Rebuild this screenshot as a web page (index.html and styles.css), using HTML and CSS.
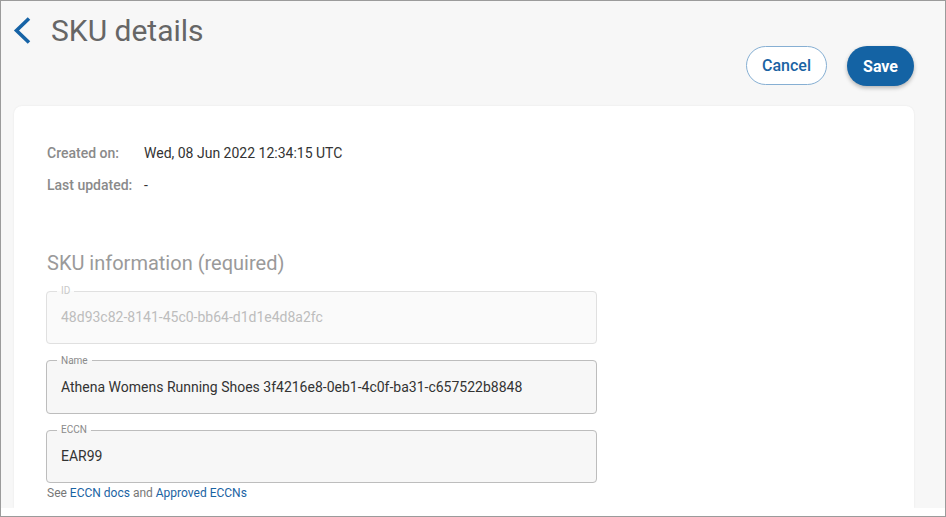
FILE: index.html
```html
<!DOCTYPE html>
<html lang="en">
<head>
<meta charset="utf-8">
<title>SKU details</title>
<link rel="stylesheet" href="styles.css">
</head>
<body>
<div class="frame">
  <header class="header">
    <div class="title-row">
      <a class="back" href="#" aria-label="Back">
        <svg width="20" height="32" viewBox="0 0 20 32" aria-hidden="true">
          <polyline points="17,3.5 4.5,15.5 17,27.5" fill="none" stroke="#1663a6" stroke-width="3.6" stroke-linejoin="miter"/>
        </svg>
      </a>
      <h1 class="title">SKU details</h1>
    </div>
    <div class="actions">
      <button class="btn btn-outline" type="button">Cancel</button>
      <button class="btn btn-primary" type="button">Save</button>
    </div>
  </header>
  <main class="card">
    <dl class="meta">
      <dt>Created on:</dt><dd>Wed, 08 Jun 2022 12:34:15 UTC</dd>
      <dt>Last updated:</dt><dd>-</dd>
    </dl>
    <h2 class="section-title">SKU information (required)</h2>
    <div class="fields">
      <fieldset class="field field-disabled">
        <legend>ID</legend>
        <div class="value">48d93c82-8141-45c0-bb64-d1d1e4d8a2fc</div>
      </fieldset>
      <fieldset class="field">
        <legend>Name</legend>
        <div class="value">Athena Womens Running Shoes 3f4216e8-0eb1-4c0f-ba31-c657522b8848</div>
      </fieldset>
      <div class="field-group">
        <fieldset class="field">
          <legend>ECCN</legend>
          <div class="value">EAR99</div>
        </fieldset>
        <p class="helper">See <a href="#">ECCN docs</a> and <a href="#">Approved ECCNs</a></p>
      </div>
    </div>
  </main>
  <div class="footer-strip"></div>
</div>
</body>
</html>
```

FILE: styles.css
```css
* { box-sizing: border-box; }

html, body {
  margin: 0;
  padding: 0;
}

body {
  font-family: Roboto, "Liberation Sans", Arial, sans-serif;
  background: #ffffff;
}

.frame {
  width: 946px;
  height: 517px;
  border: 1px solid #9b9b9b;
  background: #f7f7f7;
  display: flex;
  flex-direction: column;
  overflow: hidden;
}

.header {
  padding: 11px 31px 0 11px;
  display: flex;
  flex-direction: column;
}

.title-row {
  display: flex;
  align-items: center;
  height: 34px;
  padding-top: 4px;
}

.back {
  display: flex;
  width: 20px;
  height: 32px;
  margin-right: 19px;
}

.title {
  margin: 0;
  font-size: 30px;
  line-height: 34px;
  font-weight: 400;
  color: #666666;
}

.actions {
  display: flex;
  justify-content: flex-end;
  align-items: flex-start;
  gap: 20px;
  height: 40px;
}

.btn {
  font-family: Roboto, "Liberation Sans", Arial, sans-serif;
  font-size: 16px;
  border-radius: 20px;
  cursor: pointer;
}

.btn-outline {
  height: 39px;
  width: 81px;
  padding: 0;
  background: #ffffff;
  border: 1px solid #86afd3;
  color: #1a63a3;
  font-weight: 500;
}

.btn-primary {
  height: 40px;
  width: 67px;
  padding: 0;
  background: #1463a4;
  border: none;
  color: #ffffff;
  font-weight: 700;
  box-shadow: 0 2px 4px rgba(0, 0, 0, 0.28);
}

.card {
  flex: 1;
  margin: 20px 31px 0 13px;
  background: #ffffff;
  border-radius: 8px 8px 0 0;
  box-shadow: 0 0 2px rgba(0, 0, 0, 0.08);
  padding: 37px 0 0 33px;
}

.meta {
  display: grid;
  grid-template-columns: 97px auto;
  row-gap: 12px;
  margin: 0;
  font-size: 14px;
  line-height: 20px;
}

.meta dt {
  color: #8a8a8a;
  font-weight: 500;
}

.meta dd {
  margin: 0;
  color: #333333;
}

.section-title {
  margin: 54px 0 8px 0;
  font-size: 20px;
  line-height: 28px;
  font-weight: 400;
  color: #9a9a9a;
}

.fields {
  display: flex;
  flex-direction: column;
  gap: 10.5px;
  width: 551px;
  margin-left: -1px;
}

.field {
  margin: 0;
  padding: 0 14px 16px 14px;
  border: 1px solid #bdbdbd;
  border-radius: 4px;
  background: #f7f7f7;
  min-width: 0;
}

.field legend {
  margin-left: -4px;
  padding: 0 4px;
  font-size: 10px;
  line-height: 12px;
  color: #8a8a8a;
}

.field .value {
  padding-top: 10px;
  font-size: 14px;
  line-height: 20px;
  color: #333333;
  white-space: nowrap;
}

.field-disabled {
  border-color: #e0e0e0;
  background: #fafafa;
}

.field-disabled legend {
  color: #c9c9c9;
}

.field-disabled .value {
  color: #bdbdbd;
}

.helper {
  margin: 2px 0 0 1px;
  font-size: 12px;
  line-height: 16px;
  color: #777777;
}

.helper a {
  color: #1a63a3;
  text-decoration: none;
}

.footer-strip {
  height: 8px;
  background: #ffffff;
  flex: none;
}
```
